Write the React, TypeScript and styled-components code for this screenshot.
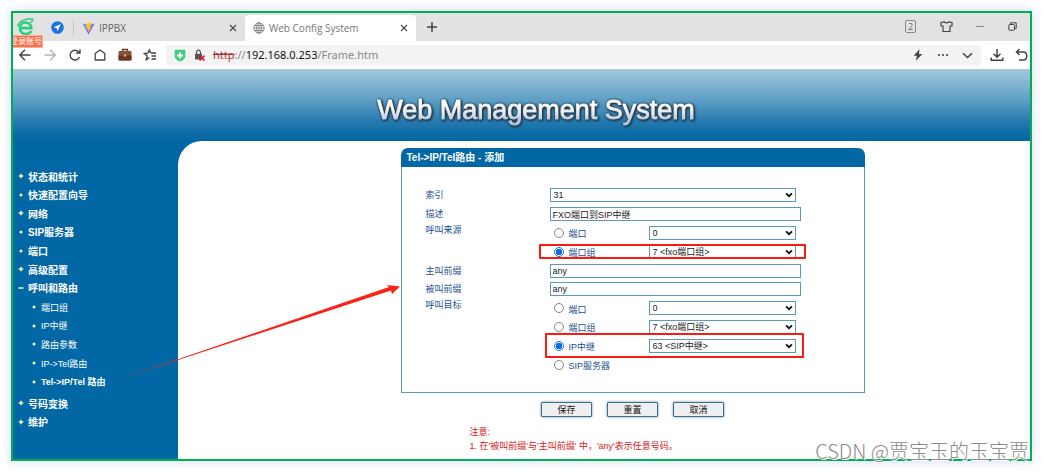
import React, { useState } from "react";
import styled, { createGlobalStyle, css } from "styled-components";

const blue = "#0268a5";
const line = "#5b9ab8";
const ink = "#24508f";
const uiFont = `"Open Sans", "Noto Sans CJK SC", sans-serif`;
const pageFont = `"Liberation Sans", "Noto Sans CJK SC", sans-serif`;

const GlobalStyle = createGlobalStyle`
  * { box-sizing: border-box; }
  body { margin: 0; background: #fff; font-family: ${pageFont}; }
  button, input, select { font: inherit; color: inherit; margin: 0; }
  ul { list-style: none; margin: 0; padding: 0; }
`;

const Frame = styled.div`
  position: relative;
  margin: 11px;
  border: 2px solid #00b050;
  box-shadow: 0 0 10px rgba(120, 150, 220, 0.35);
  background: #fff;
`;

const Clip = styled.div`
  overflow: hidden;
`;

/* ---------- browser chrome ---------- */

const TabBar = styled.header`
  position: relative;
  display: flex;
  align-items: center;
  height: 28px;
  background: #e2e2e2;
  font: 10px ${uiFont};
  color: #666;
`;

const Brand = styled.div`
  display: flex;
  align-items: center;
  flex: none;
  width: 60px;
  padding-left: 4px;
  gap: 17px;
`;

const Divider = styled.span`
  flex: none;
  width: 1px;
  height: 15px;
  background: #c6c6c6;
`;

const LoginBadge = styled.button`
  position: absolute;
  z-index: 2;
  top: 22px;
  left: 0;
  width: 30px;
  height: 13px;
  padding: 0;
  border: 1px solid #ffb09a;
  border-left: 0;
  background: #fb7048;
  color: #fff;
  font: 8px/11px ${pageFont};
  display: flex;
  justify-content: flex-end;
  overflow: hidden;
  white-space: nowrap;
`;

const Tab = styled.div<{ $active?: boolean }>`
  display: flex;
  align-items: center;
  flex: none;
  gap: 4px;
  width: 171px;
  height: 26px;
  margin-top: 2px;
  padding: 0 8px;
  border-radius: 4px 4px 0 0;
  ${(p) => p.$active && css`background: #fff; color: #777;`}
`;

const TabTitle = styled.span`
  flex: 1;
  white-space: nowrap;
`;

const IconButton = styled.button`
  display: flex;
  align-items: center;
  justify-content: center;
  padding: 0;
  border: 0;
  background: none;
  color: #444;
`;

const WindowTools = styled.div`
  display: flex;
  align-items: center;
  justify-content: space-between;
  width: 112px;
  margin-left: auto;
  margin-right: 13px;
  margin-bottom: 2px;
`;

const Counter = styled.span`
  width: 11px;
  height: 13px;
  border: 1px solid #888;
  border-radius: 2px;
  font: 9px/11px ${uiFont};
  text-align: center;
`;

const Toolbar = styled.div`
  display: flex;
  align-items: center;
  height: 28px;
  background: #fff;
`;

const NavButtons = styled.div`
  display: grid;
  grid-template-columns: repeat(6, 1fr);
  flex: none;
  width: 149px;
  margin-right: 4px;
`;

const AddressBar = styled.div`
  display: flex;
  align-items: center;
  flex: 1;
  height: 21px;
  padding: 0 8px;
  border-radius: 3px;
  background: #f3f3f3;
  gap: 8px;
`;

const Url = styled.span`
  flex: 1;
  color: #888;
  font: 11px/20px "Noto Sans", ${uiFont};
  white-space: nowrap;
  s { color: #a8322c; }
  b { color: #111; font-weight: 400; }
`;

const AddressTools = styled.div`
  display: flex;
  justify-content: space-between;
  align-items: center;
  width: 60px;
`;

const EndTools = styled.div`
  display: flex;
  flex: none;
  gap: 11px;
  width: 49px;
  padding-left: 9px;
  overflow: hidden;
`;

/* ---------- web page ---------- */

const Banner = styled.div`
  display: flex;
  align-items: center;
  justify-content: center;
  height: 72px;
  padding: 9px 0 0 29px;
  background: linear-gradient(#a3c9dd 0%, #8bb9d4 16%, #5c9ec5 44%, #287bb0 72%, #0a6aa6 92%, ${blue} 100%);
`;

const BannerTitle = styled.h1`
  margin: 0;
  font: 27px/34px ${pageFont};
  white-space: nowrap;
  color: transparent;
  -webkit-text-stroke: 1px transparent;
  background: linear-gradient(#fff 30%, #eef1f6 50%, #b4c6dd 85%);
  background-clip: text;
  -webkit-background-clip: text;
  filter: drop-shadow(0 0 1px #1d2f3d) drop-shadow(1px 1px 1px #1d2f3d);
`;

const Body = styled.div`
  display: flex;
  background: ${blue};
`;

const Sidebar = styled.nav`
  flex: none;
  width: 165px;
  padding: 26px 0 0 5px;
  color: #fff;
`;

const NavList = styled.ul<{ $height: number; $sub?: boolean }>`
  display: grid;
  grid-auto-rows: 1fr;
  height: ${(p) => p.$height}px;
  font-size: 10px;
  font-weight: 700;
  ${(p) => p.$sub && css`
    margin: 1px 0 3px;
    padding-left: 13px;
    font-size: 9px;
    font-weight: 400;
  `}
`;

const NavLink = styled.a<{ $current?: boolean }>`
  display: flex;
  align-items: center;
  gap: 4px;
  height: 100%;
  color: #fff;
  text-decoration: none;
  white-space: nowrap;
  ${(p) => p.$current && css`font-weight: 700;`}
`;

const Main = styled.main`
  flex: 1;
  display: flex;
  flex-direction: column;
  align-items: center;
  padding: 7px 0 6px 57px;
  border-top-left-radius: 24px;
  background: #fff;
`;

const RouteForm = styled.form`
  width: 464px;
  max-width: 100%;
`;

const PanelTitle = styled.h2`
  height: 19px;
  margin: 0;
  padding-left: 6px;
  border-radius: 7px 7px 0 0;
  background: ${blue};
  color: #fff;
  font: bold 10px/19px ${pageFont};
`;

const PanelBody = styled.div`
  padding: 19px 61px 18px 24px;
  border: 1px solid ${line};
  border-top: 0;
`;

const Fields = styled.div`
  display: grid;
  grid-template-columns: 124px 1fr;
  grid-template-rows: repeat(10, 1fr);
  height: 188px;
  font-size: 9px;
  line-height: 12px;
  color: ${ink};
`;

const FieldLabel = styled.label`
  align-self: center;
`;

const GroupLabel = styled.span<{ $rows: number }>`
  grid-row: span ${(p) => p.$rows};
`;

const Control = styled.div`
  display: flex;
  align-items: center;
`;

const TextInput = styled.input`
  width: 251px;
  height: 14px;
  padding: 0 2px;
  border: 1px solid ${line};
  color: #222;
`;

const SelectBox = styled.div<{ $wide?: boolean }>`
  display: grid;
  align-items: center;
  width: ${(p) => (p.$wide ? 246 : 147)}px;
  select, svg { grid-area: 1 / 1; }
  svg { justify-self: end; margin-right: 3px; pointer-events: none; }
`;

const NativeSelect = styled.select`
  appearance: none;
  width: 100%;
  height: 14px;
  padding: 0 3px;
  border: 1px solid ${line};
  border-radius: 0;
  background: #fff;
  color: #222;
  line-height: 12px;
`;

const Choice = styled.div<{ $mark?: "narrow" | "tall" }>`
  position: relative;
  display: flex;
  align-items: center;
  width: 246px;
  ${(p) => p.$mark && css`
    &::after {
      content: "";
      position: absolute;
      inset: ${p.$mark === "narrow" ? "2px -10px 2px -11px" : "-3px -8px -3px -5px"};
      border: 2px solid #fb1a12;
      border-radius: 1px;
      pointer-events: none;
    }
  `}
`;

const ChoiceLabel = styled.label`
  display: flex;
  align-items: center;
  gap: 5px;
  width: 99px;
  padding-left: 4px;
  white-space: nowrap;
  span { padding-top: 3px; }
`;

const Radio = styled.input`
  appearance: none;
  width: 10px;
  height: 10px;
  border: 1px solid #858585;
  border-radius: 50%;
  background: #fff;
  &:checked {
    border-color: #1a73e8;
    background: radial-gradient(circle, #0b6be8 0 3px, #fff 3px);
  }
`;

const Actions = styled.div`
  display: flex;
  justify-content: center;
  gap: 15px;
  margin-top: 9px;
`;

const ActionButton = styled.button`
  width: 51px;
  height: 15px;
  padding: 0;
  border: 1px solid #2f7299;
  border-radius: 1px;
  background: #efefef;
  box-shadow: 0 0 3px rgba(0, 0, 0, 0.45);
  color: #111;
  font-size: 9px;
  line-height: 12px;
`;

const Notes = styled.div`
  margin-top: 8px;
  padding-left: 69px;
  color: #d8201c;
  font-size: 9px;
  line-height: 14px;
  white-space: nowrap;
`;

const Arrow = styled.svg`
  position: absolute;
  left: 102px;
  top: 268px;
  pointer-events: none;
`;

const Watermark = styled.div`
  position: absolute;
  right: 1px;
  bottom: -6px;
  color: #8c8c8c;
  font: 300 20px/28px "Noto Sans CJK SC", sans-serif;
  text-shadow: 1px 1px 0 #fff, -1px -1px 0 #fff;
  white-space: nowrap;
`;

/* ---------- icons ---------- */

type Stroke = { w?: number; h?: number; box?: string; sw?: number; children: React.ReactNode };
const Icon = ({ w = 14, h = 14, box = "0 0 14 14", sw = 1.4, children }: Stroke) => (
  <svg width={w} height={h} viewBox={box} fill="none" stroke="currentColor" strokeWidth={sw} aria-hidden="true">
    {children}
  </svg>
);

const CloseIcon = () => (
  <Icon w={8} h={8} box="0 0 8 8" sw={1.1}><path d="M1 1l6 6M7 1L1 7" /></Icon>
);

const BrowserLogo = () => (
  <svg width="17" height="18" viewBox="0 0 17 18" fill="none" aria-hidden="true">
    <path d="M3 10.2h11.2C14.4 6.8 12 4.5 8.8 4.5C5.3 4.5 2.9 7 2.9 10.2C2.9 13.6 5.3 16 8.7 16C11.3 16 13.3 14.9 14.2 13" stroke="#2bcf7b" strokeWidth="2.7" />
    <path d="M.6 8.2C2 3.2 8.5.2 15.8 1.3C15.600 2.600 14.900 3.600 13.700 4.200" stroke="#2bcf7b" strokeWidth="1.500" />
  </svg>
);

const PlaneIcon = () => (
  <svg width="13" height="13" viewBox="0 0 13 13" aria-hidden="true">
    <circle cx="6.5" cy="6.5" r="6.3" fill="#1a73e0" />
    <path d="M9.800 3L2.800 6.300l2.900.9.900 2.900z" fill="#fff" />
  </svg>
);

const ViteIcon = () => (
  <svg width="13" height="13" viewBox="0 0 13 13" aria-hidden="true">
    <defs>
      <linearGradient id="vite" x1="0" y1="0" x2=".6" y2="1">
        <stop offset="0" stopColor="#4fb6fb" />
        <stop offset="1" stopColor="#b036f0" />
      </linearGradient>
    </defs>
    <path d="M.4 1.600L6.500 12.600L12.700 1.600L6.600 2.800z" fill="url(#vite)" />
    <path d="M9.600.3L4.400 1.200L4.100 6l1.500-.2l-.4 2l1.100-.2l-.5 3.400l3.600-6l-1.500.2l.8-2.200z" fill="#ffc61a" />
  </svg>
);

const GlobeIcon = () => (
  <Icon w={12} h={12} box="0 0 12 12" sw={0.8}>
    <circle cx="6" cy="6" r="5.200" />
    <ellipse cx="6" cy="6" rx="2.400" ry="5.200" />
    <path d="M6 .8v10.400M.8 6h10.400M1.500 3.500h9M1.500 8.500h9" />
  </Icon>
);

const BriefcaseIcon = () => (
  <svg width="14" height="14" viewBox="0 0 14 14" aria-hidden="true">
    <path d="M4.500 3.500V1.500h5v2" fill="none" stroke="#5d3b29" strokeWidth="1.300" />
    <rect x=".5" y="3" width="13" height="9.500" rx="1.200" fill="#8a5138" />
    <path d="M.5 7.500h13V11.500q0 1-1 1h-11q-1 0-1-1z" fill="#693824" />
    <rect x="5.900" y="6.500" width="2.200" height="2" fill="#f0c869" />
  </svg>
);

const ShieldIcon = () => (
  <svg width="12" height="13" viewBox="0 0 12 13" aria-hidden="true">
    <path d="M1.500.8h9q.8 0 .8.8v5.600Q11 10.500 6 12.600Q1 10.500.7 7.200V1.600q0-.8.8-.8z" fill="#3ed080" />
    <path d="M6 3.500v6M3 6.500h6" stroke="#fff" strokeWidth="1.800" />
  </svg>
);

const InsecureIcon = () => (
  <svg width="11" height="12" viewBox="0 0 11 12" aria-hidden="true">
    <path d="M2.500 5.500V3.500q0-2.300 2-2.300t2 2.300v2" fill="none" stroke="#555" strokeWidth="1.200" />
    <rect x="1" y="4.800" width="7" height="5.700" fill="#555" />
    <path d="M5.500 6.500l5 5M10.500 6.500l-5 5" stroke="#d3202a" strokeWidth="1.700" />
  </svg>
);

const Chevron = () => (
  <svg width="8" height="6" viewBox="0 0 8 6" fill="none" aria-hidden="true">
    <path d="M1 1.300L4 4.200L7 1.300" stroke="#111" strokeWidth="1.800" />
  </svg>
);

const Marker = ({ kind }: { kind: "plus" | "dot" | "minus" }) => (
  <svg width="6" height="6" viewBox="0 0 6 6" aria-hidden="true">
    {kind === "dot" && <circle cx="3" cy="3" r="1.500" fill="#f4f8a8" />}
    {kind !== "dot" && <path d={kind === "plus" ? "M.7 3h4.600M3 .7v4.600" : "M.5 3h5"} stroke="#f4f8a8" strokeWidth="1.500" />}
  </svg>
);

/* ---------- content ---------- */

type Entry = { text: string; kind: "plus" | "dot" | "minus"; current?: boolean };

const topEntries: Entry[] = [
  { text: "状态和统计", kind: "plus" },
  { text: "快速配置向导", kind: "dot" },
  { text: "网络", kind: "plus" },
  { text: "SIP服务器", kind: "dot" },
  { text: "端口", kind: "dot" },
  { text: "高级配置", kind: "plus" },
  { text: "呼叫和路由", kind: "minus" },
];
const routeEntries: Entry[] = [
  { text: "端口组", kind: "dot" },
  { text: "IP中继", kind: "dot" },
  { text: "路由参数", kind: "dot" },
  { text: "IP->Tel路由", kind: "dot" },
  { text: "Tel->IP/Tel 路由", kind: "dot", current: true },
];
const lastEntries: Entry[] = [
  { text: "号码变换", kind: "plus" },
  { text: "维护", kind: "plus" },
];

const NavGroup = ({ entries, height, sub }: { entries: Entry[]; height: number; sub?: boolean }) => (
  <NavList $height={height} $sub={sub}>
    {entries.map((e) => (
      <li key={e.text}>
        <NavLink href="#" $current={e.current} aria-current={e.current ? "page" : undefined}>
          <Marker kind={e.kind} />
          {e.text}
        </NavLink>
      </li>
    ))}
  </NavList>
);

const Select = ({ id, label, value, wide }: { id?: string; label?: string; value: string; wide?: boolean }) => (
  <SelectBox $wide={wide}>
    <NativeSelect id={id} aria-label={label} defaultValue={value}>
      <option>{value}</option>
    </NativeSelect>
    <Chevron />
  </SelectBox>
);

type Option = { text: string; value?: string; mark?: "narrow" | "tall" };

const sources: Option[] = [
  { text: "端口", value: "0" },
  { text: "端口组", value: "7 <fxo端口组>", mark: "narrow" },
];
const targets: Option[] = [
  { text: "端口", value: "0" },
  { text: "端口组", value: "7 <fxo端口组>" },
  { text: "IP中继", value: "63 <SIP中继>", mark: "tall" },
  { text: "SIP服务器" },
];

const ChoiceGroup = ({ title, name, options, initial }: { title: string; name: string; options: Option[]; initial: string }) => {
  const [picked, setPicked] = useState(initial);
  return (
    <>
      <GroupLabel $rows={options.length}>{title}</GroupLabel>
      {options.map((o) => (
        <Choice key={o.text} $mark={o.mark}>
          <ChoiceLabel>
            <Radio type="radio" name={name} checked={picked === o.text} onChange={() => setPicked(o.text)} />
            <span>{o.text}</span>
          </ChoiceLabel>
          {o.value && <Select label={`${title} ${o.text}`} value={o.value} />}
        </Choice>
      ))}
    </>
  );
};

const TextField = ({ id, label, value }: { id: string; label: string; value: string }) => (
  <>
    <FieldLabel htmlFor={id}>{label}</FieldLabel>
    <Control><TextInput id={id} defaultValue={value} /></Control>
  </>
);

export default function App() {
  return (
    <>
      <GlobalStyle />
      <Frame>
        <Clip>
          <TabBar>
            <Brand>
              <BrowserLogo />
              <PlaneIcon />
            </Brand>
            <Divider />
            <LoginBadge>登录账号</LoginBadge>
            <Tab>
              <ViteIcon />
              <TabTitle>IPPBX</TabTitle>
              <IconButton aria-label="关闭标签页"><CloseIcon /></IconButton>
            </Tab>
            <Tab $active>
              <GlobeIcon />
              <TabTitle>Web Config System</TabTitle>
              <IconButton aria-label="关闭标签页"><CloseIcon /></IconButton>
            </Tab>
            <IconButton aria-label="新标签页">
              <Icon w={32} h={12} box="0 0 32 12" sw={1.5}><path d="M16 1v10M11 6h10" /></Icon>
            </IconButton>
            <WindowTools>
              <Counter>2</Counter>
              <IconButton aria-label="皮肤">
                <Icon w={13} h={13} box="0 0 13 13" sw={1.2}>
                  <path d="M4 1.800Q6.500 4 9 1.800L12 2.500v3.500H10v5.500H3V6H1V2.500z" />
                </Icon>
              </IconButton>
              <IconButton aria-label="最小化">
                <Icon w={8} h={8} box="0 0 8 8" sw={1}><path stroke="#888" d="M0 4.500h8" /></Icon>
              </IconButton>
              <IconButton aria-label="还原">
                <Icon w={9} h={9} box="0 0 9 9" sw={1}>
                  <rect x=".8" y="2.500" width="5.700" height="5.700" rx="1" />
                  <path d="M2.500 2.300V.8h5.700v5.700H6.700" />
                </Icon>
              </IconButton>
            </WindowTools>
          </TabBar>

          <Toolbar>
            <NavButtons>
              <IconButton aria-label="后退"><Icon><path d="M12.500 7H2M7 1.800L1.800 7L7 12.200" /></Icon></IconButton>
              <IconButton aria-label="前进">
                <Icon><path stroke="#b5b5b5" d="M1.500 7H12M7 1.800L12.200 7L7 12.200" /></Icon>
              </IconButton>
              <IconButton aria-label="刷新">
                <Icon><path d="M11.500 9A4.900 4.900 0 1 1 11 4.300M12 1.200V5H8.200" /></Icon>
              </IconButton>
              <IconButton aria-label="主页">
                <Icon sw={1.3}><path d="M2.200 12V5.500L7 2L11.800 5.500V12z" strokeLinejoin="round" /></Icon>
              </IconButton>
              <IconButton aria-label="工具箱"><BriefcaseIcon /></IconButton>
              <IconButton aria-label="收藏">
                <Icon sw={1.4}>
                  <path d="M8 5H13M8.500 8H13M8.500 11H13M6.300 9.600L3.200 11.600L4.100 8L1.300 5.500L4.900 5.200L6.300 2L7.600 5" />
                </Icon>
              </IconButton>
            </NavButtons>
            <AddressBar>
              <ShieldIcon />
              <InsecureIcon />
              <Url><s>http</s>://<b>192.168.0.253</b>/Frame.htm</Url>
              <AddressTools>
                <IconButton aria-label="极速模式">
                  <svg width="10" height="12" viewBox="0 0 10 12" fill="#444" aria-hidden="true"><path d="M6.500.3L.6 6.800h3.300L2.800 11.700L9.400 5H6z" /></svg>
                </IconButton>
                <IconButton aria-label="更多">
                  <svg width="12" height="4" viewBox="0 0 12 4" fill="#444" aria-hidden="true"><circle cx="2" cy="2" r="1.100" /><circle cx="6" cy="2" r="1.100" /><circle cx="10" cy="2" r="1.100" /></svg>
                </IconButton>
                <IconButton aria-label="展开">
                  <Icon w={11} h={7} box="0 0 11 7" sw={1.5}><path d="M1 1.200L5.500 5.500L10 1.200" /></Icon>
                </IconButton>
              </AddressTools>
            </AddressBar>
            <EndTools>
              <IconButton aria-label="下载">
                <Icon sw={1.5}><path d="M7 1v8M3.500 5.800L7 9.300L10.500 5.800M1.200 9.500V12.300H12.800V9.500" /></Icon>
              </IconButton>
              <IconButton aria-label="撤销">
                <Icon sw={1.5}><path d="M4.500 1L1.500 4L4.500 7M1.500 4H8.300Q11.800 4 11.800 8T8.300 12H4" /></Icon>
              </IconButton>
            </EndTools>
          </Toolbar>

          <Banner>
            <BannerTitle>Web Management System</BannerTitle>
          </Banner>
          <Body>
            <Sidebar>
              <NavGroup entries={topEntries} height={130} />
              <NavGroup entries={routeEntries} height={93} sub />
              <NavGroup entries={lastEntries} height={37} />
            </Sidebar>
            <Main>
              <RouteForm onSubmit={(e) => e.preventDefault()}>
                <PanelTitle>Tel-&gt;IP/Tel路由 - 添加</PanelTitle>
                <PanelBody>
                  <Fields>
                    <FieldLabel htmlFor="index">索引</FieldLabel>
                    <Control><Select id="index" value="31" wide /></Control>
                    <TextField id="desc" label="描述" value="FXO端口到SIP中继" />
                    <ChoiceGroup title="呼叫来源" name="source" options={sources} initial="端口组" />
                    <TextField id="caller" label="主叫前缀" value="any" />
                    <TextField id="callee" label="被叫前缀" value="any" />
                    <ChoiceGroup title="呼叫目标" name="target" options={targets} initial="IP中继" />
                  </Fields>
                </PanelBody>
                <Actions>
                  <ActionButton type="submit">保存</ActionButton>
                  <ActionButton type="reset">重置</ActionButton>
                  <ActionButton type="button">取消</ActionButton>
                </Actions>
                <Notes>
                  <div>注意:</div>
                  <div>1. 在'被叫前缀'与'主叫前缀' 中，'any'表示任意号码。</div>
                </Notes>
              </RouteForm>
            </Main>
          </Body>
        </Clip>
        <Arrow width="288" height="104" viewBox="0 0 288 104" aria-hidden="true">
          <path d="M2 99L274 6L272 4L285 5.500L277 13L276 9.500z" fill="#fb2318" />
        </Arrow>
        <Watermark>CSDN @贾宝玉的玉宝贾</Watermark>
      </Frame>
    </>
  );
}
